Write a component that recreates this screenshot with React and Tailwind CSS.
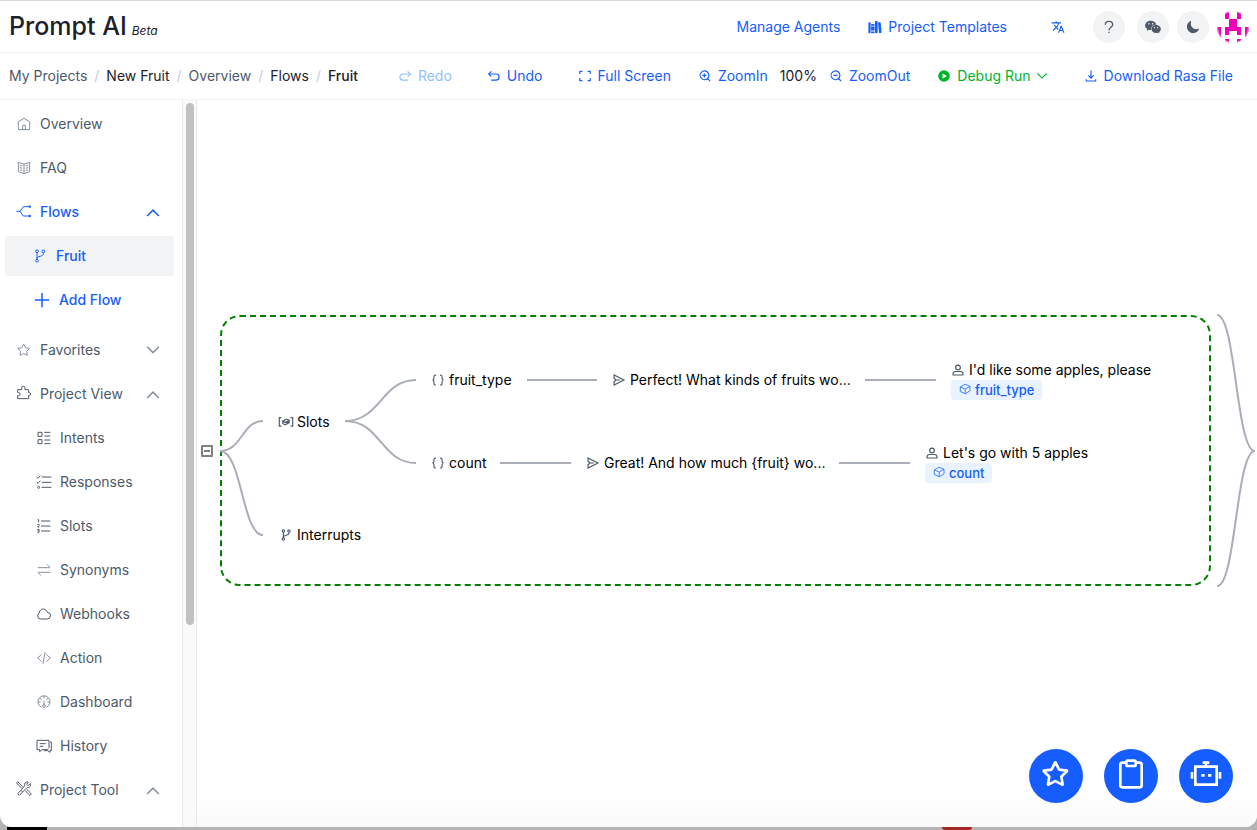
import React from "react";
import { MdTranslate } from "react-icons/md";
import { IoLibrary, IoMoon } from "react-icons/io5";
import { AiFillWechat } from "react-icons/ai";

const PATHS = {
  home: ["M7 17 24 7l17 10v24H7V17Z", "M20 28h8v13h-8V28Z"],
  book: [
    "M24 13 7 7v28l17 6 17-6V7l-17 6Zm0 0v27.5M29 18l7-2.5M29 25l7-2.5M29 32l7-2.5M19 18l-7-2.5m7 9.5-7-2.5m7 9.5-7-2.5",
  ],
  branch: [
    "M19 10a4 4 0 1 1-8 0 4 4 0 0 1 8 0ZM38 10a4 4 0 1 1-8 0 4 4 0 0 1 8 0ZM19 38a4 4 0 1 1-8 0 4 4 0 0 1 8 0ZM15 14v20M34 14v3c0 10-19 6-19 15",
  ],
  plus: ["M5 24h38M24 5v38"],
  star: [
    "M22.552 6.908a.5.5 0 0 1 .896 0l5.02 10.17a.5.5 0 0 0 .376.274l11.224 1.631a.5.5 0 0 1 .277.853l-8.122 7.916a.5.5 0 0 0-.143.443l1.917 11.178a.5.5 0 0 1-.726.527l-10.038-5.278a.5.5 0 0 0-.466 0L12.73 39.9a.5.5 0 0 1-.726-.527l1.918-11.178a.5.5 0 0 0-.144-.443l-8.122-7.916a.5.5 0 0 1 .278-.853l11.223-1.63a.5.5 0 0 0 .376-.274l5.02-10.17Z",
  ],
  up: ["M39.6 34.557 24.043 19 8.487 34.557"],
  down: ["M39.6 15.443 24.043 31 8.487 15.443"],
  undo: ["m15 8-9 9 9 9", "M6 17h25a10 10 0 0 1 0 21H14"],
  redo: ["m33 8 9 9-9 9", "M42 17H17a10 10 0 0 0 0 21h17"],
  full: [
    "M42 17V9a1 1 0 0 0-1-1h-8M6 17V9a1 1 0 0 1 1-1h8m27 23v8a1 1 0 0 1-1 1h-8M6 31v8a1 1 0 0 0 1 1h8",
  ],
  zoomIn: ["M32.6 32.6A15 15 0 1 0 11.4 11.4a15 15 0 0 0 21.2 21.2Zm0 0 8.9 8.9M29 22H15m7 7V15"],
  zoomOut: ["M32.6 32.6A15 15 0 1 0 11.4 11.4a15 15 0 0 0 21.2 21.2Zm0 0 8.9 8.9M29 22H15"],
  download: ["m33.072 22.071-9.07 9.071-9.072-9.07M24 5v26m16 4v6H8v-6"],
  send: ["m14 24-7-6V7l34 17L7 41V30l7-6Zm0 0h13"],
  user: ["M7 37c0-5 4-8 9-8h16c5 0 9 3 9 8v3a1 1 0 0 1-1 1H8a1 1 0 0 1-1-1v-3Z", "M32 15a8 8 0 1 1-16 0 8 8 0 0 1 16 0Z"],
  question: ["M13 17c0-6 5-10 11-10s11 4 11 10c0 8-11 8-11 17", "M24 38v4"],
  code: ["M16.734 12.686 5.42 24l11.314 11.314m14.521-22.628L42.57 24 31.255 35.314M27.2 6.28l-6.251 35.453"],
  dashboard: [
    "M17 40a18 18 0 1 1 14 0M24 6v8M42 24h-8M6 24h8M11 12l6 6M37 12l-6 6M24 20v12",
    "M28 36a4 4 0 1 1-8 0 4 4 0 0 1 8 0Z",
  ],
  swap: ["M5 17h35.586c.89 0 1.337-1.077.707-1.707L33 7M43 31H7.414c-.89 0-1.337 1.077-.707 1.707L15 41"],
  cloud: ["M5 30a9 9 0 0 0 9 9h19a10 10 0 0 0 1-20C32 13 28 9 22 9c-7 0-12 5-12 12a9 9 0 0 0-5 9Z"],
  split: ["M1 22h11L22 8h20M12 22l10 14h20", "M40 5l5 3-5 3ZM40 33l5 3-5 3Z"],
  puzzle: ["M5 11h12V6a5 5 0 0 1 10 0v5h11v9h2a4 4 0 0 1 0 8h-2v10H5V29h3a4 4 0 0 0 0-9H5Z"],
  intents: ["M6 7h12v12H6ZM6 29h12v12H6ZM25 7h18M25 18h18M25 30h18M25 41h18"],
  responses: ["M17 9h29M17 25h29M17 40h29M2 9l4 4 7-8M2 24l4 4 7-8M5 40a3 3 0 1 0 6 0 3 3 0 0 0-6 0Z"],
  ordered: ["M15 9h28M15 24h28M15 39h28M5 5h3v8M4 19h5v4l-4 4h5M4 34h5v9H4M5 38h4"],
  chat: ["M37 35H18l-7 6v-6H3V7h36v24", "M42 12h4v26h-4v5l-7-5H24", "M11 17h18M11 25h11"],
  tools: [
    "M15 25 5 35l5 5 10-10M20 14 10 4 5-1 2 3l5 6 10 9",
    "M43 5l-7 6-4-4 5-7c-9-2-13 5-11 11L15 25l5 5 13-13c7 1 13-4 10-12Z",
    "M28 26l11 12c3 4 8-1 5-5L33 23",
  ],
  braces: ["M17 7h-3c-4 0-4 3-4 7v4c0 4-2 6-5 6 3 0 5 2 5 6v4c0 4 0 7 4 7h3M31 7h3c4 0 4 3 4 7v4c0 4 2 6 5 6-3 0-5 2-5 6v4c0 4 0 7-4 7h-3"],
  cube: ["M24 1 44 9v18L26 39 5 30V12L24 1ZM5 12l20 8 19-11M25 20v19"],
  slot: ["M8 9H1v29h7M40 9h7v29h-7", "M13 21l13-7 9 4-14 8-8-5v8l8 5 14-8v-8M21 26l14-2"],
  clipboard: [
    "M17 7h-6a3 3 0 0 0-3 3v31a3 3 0 0 0 3 3h26a3 3 0 0 0 3-3V10a3 3 0 0 0-3-3h-6",
    "M19 4h10a2 2 0 0 1 2 2v4a2 2 0 0 1-2 2H19a2 2 0 0 1-2-2V6a2 2 0 0 1 2-2Z",
  ],
  robot: ["M8 13h32v27H8ZM24 13V7M19 7h10M3 21v10M45 21v10M17 26h5M27 26h5"],
};

function Icon({ name, className = "size-[14px]", w = 4 }) {
  return (
    <svg viewBox="0 0 48 48" fill="none" stroke="currentColor" strokeWidth={w} className={`shrink-0 overflow-visible ${className}`} aria-hidden="true">
      {PATHS[name].map((d) => (
        <path key={d} d={d} />
      ))}
    </svg>
  );
}

function Slash() {
  return <span className="text-[#c9cdd4]" aria-hidden="true">/</span>;
}

function Tool({ icon, children, className = "text-[#165dff]", disabled = false }) {
  return (
    <button type="button" disabled={disabled} className={`flex items-center gap-1.5 ${className}`}>
      <Icon name={icon} />
      {children}
    </button>
  );
}

function NavItem({ icon, label, sub, active, chevron, className = "", iconColor = "text-[#86909c]" }) {
  return (
    <a
      href="#"
      className={`flex h-10 shrink-0 items-center gap-2 rounded-sm pr-3 ${sub ? "pl-[31px]" : "pl-[11px]"} ${active ? "font-medium text-[#165dff]" : "text-[#4e5969]"} ${className}`}
    >
      <Icon name={icon} w={3} className={`size-4 ${active ? "" : iconColor}`} />
      <span className="flex-1">{label}</span>
      {chevron && <Icon name={chevron} className={`size-[18px] ${active ? "" : "text-[#86909c]"}`} />}
    </a>
  );
}

function Avatar() {
  return (
    <svg viewBox="0 0 32 32" className="size-8" role="img" aria-label="Account">
      <clipPath id="disc">
        <circle cx="16" cy="16" r="16" />
      </clipPath>
      <path
        clipPath="url(#disc)"
        fill="#f000b8"
        d="M8 0h4v8H8ZM20 0h4v8h-4ZM12 8h8v8h4v8h-4v-4h-8v4H8v-8h4ZM0 16h4v12H0ZM28 16h4v12h-4ZM8 28h4v4H8ZM20 28h4v4h-4Z"
      />
      <circle cx="16" cy="16" r="15.5" fill="none" stroke="#f2f3f5" strokeWidth="0.5" />
    </svg>
  );
}

function Label({ icon, children, className }) {
  return (
    <div className={`absolute flex -translate-y-1/2 items-center gap-1 whitespace-nowrap text-black ${className}`}>
      <Icon name={icon} className="size-[14px] text-[#4e5969]" />
      {children}
    </div>
  );
}

function Tag({ children }) {
  return (
    <span className="flex h-5 w-fit items-center gap-1 rounded-sm bg-[#e8f3ff] px-2 text-[13px] font-medium text-[#165dff]">
      <Icon name="cube" className="size-3" w={3} />
      {children}
    </span>
  );
}

function Reply({ text, slot, className }) {
  return (
    <div className={`absolute whitespace-nowrap text-black ${className}`}>
      <div className="flex h-5 items-center gap-1">
        <Icon name="user" className="size-[14px] text-[#4e5969]" />
        {text}
      </div>
      <Tag>{slot}</Tag>
    </div>
  );
}

function Fab({ icon, label }) {
  return (
    <button type="button" aria-label={label} className="flex size-[54px] items-center justify-center rounded-full bg-[#165dff] pb-1 text-white">
      <Icon name={icon} className="size-8" />
    </button>
  );
}

export default function App() {
  return (
    <div className="flex h-screen flex-col bg-[#b4b4b4] font-['Inter',sans-serif] text-sm">
      <div className="flex min-h-0 flex-1 flex-col overflow-hidden rounded-b-xl border-t border-[#d5d8d8] bg-white pt-px">
        <header className="flex h-[51px] shrink-0 items-center border-b border-[#f2f3f5] pr-2 pl-[9px]">
          <h1 className="flex items-baseline gap-[5px] text-[#1d2129]">
            <span className="text-[25px] font-medium">Prompt AI</span>
            <em className="text-xs">Beta</em>
          </h1>
          <nav className="ml-auto flex items-center text-[#165dff]">
            <a href="#" className="mr-7">Manage Agents</a>
            <a href="#" className="mr-11 flex items-center gap-1.5">
              <IoLibrary className="size-[14px]" />
              Project Templates
            </a>
            <button type="button" aria-label="Language" className="mr-7">
              <MdTranslate className="size-[14px]" />
            </button>
          </nav>
          <div className="flex items-center text-[#4e5969]">
            <button type="button" aria-label="Help" className="mr-3 flex size-8 items-center justify-center rounded-full bg-[#f2f3f5]">
              <Icon name="question" className="size-4" />
            </button>
            <button type="button" aria-label="WeChat" className="mr-2 flex size-8 items-center justify-center rounded-full bg-[#f2f3f5]">
              <AiFillWechat className="size-[18px]" />
            </button>
            <button type="button" aria-label="Dark mode" className="mr-2 flex size-8 items-center justify-center rounded-full bg-[#f2f3f5]">
              <IoMoon className="size-[14px]" />
            </button>
            <Avatar />
          </div>
        </header>

        <div className="flex h-[47px] shrink-0 items-center border-b border-[#f2f3f5] pr-6 pl-[9px] whitespace-nowrap">
          <nav aria-label="Breadcrumb" className="mr-auto flex items-center gap-[7px] text-[#1d2129]">
            <a href="#" className="text-[#4e5969]">My Projects</a>
            <Slash />
            <a href="#">New Fruit</a>
            <Slash />
            <a href="#" className="text-[#4e5969]">Overview</a>
            <Slash />
            <a href="#">Flows</a>
            <Slash />
            <span className="font-medium">Fruit</span>
          </nav>
          <div className="flex items-center gap-[35px]">
            <Tool icon="redo" disabled className="text-[#94bfff]">Redo</Tool>
            <Tool icon="undo">Undo</Tool>
            <Tool icon="full">Full Screen</Tool>
          </div>
          <div className="mx-[27px] flex items-center gap-3">
            <Tool icon="zoomIn">ZoomIn</Tool>
            <span className="text-[#1d2129]">100%</span>
            <Tool icon="zoomOut">ZoomOut</Tool>
          </div>
          <div className="flex items-center gap-[35px]">
            <button type="button" className="flex items-center gap-1.5 text-[#00b42a]">
              <svg viewBox="0 0 48 48" className="size-[14px]" aria-hidden="true">
                <circle cx="24" cy="24" r="20" fill="currentColor" />
                <path d="M19 15v18l15-9Z" fill="white" />
              </svg>
              <span className="flex items-center gap-1">
                Debug Run
                <Icon name="down" className="size-[14px]" />
              </span>
            </button>
            <a href="#" className="flex items-center gap-1.5 text-[#165dff]">
              <Icon name="download" />
              Download Rasa File
            </a>
          </div>
        </div>

        <div className="flex min-h-0 flex-1">
          <nav aria-label="Project" className="flex w-[182px] shrink-0 flex-col gap-1 overflow-hidden py-1 pr-2 pl-[5px]">
            <NavItem icon="home" label="Overview" />
            <NavItem icon="book" label="FAQ" />
            <NavItem icon="split" label="Flows" active chevron="up" />
            <a href="#" className="flex h-10 shrink-0 items-center gap-2 rounded-sm bg-[#f2f3f5] pl-[27px] font-medium text-[#165dff]">
              <Icon name="branch" className="size-4" w={3} />
              Fruit
            </a>
            <button type="button" className="flex h-10 shrink-0 items-center gap-2 pl-7 font-medium text-[#165dff]">
              <Icon name="plus" className="size-[18px]" />
              Add Flow
            </button>
            <NavItem icon="star" label="Favorites" chevron="down" className="mt-1.5" />
            <NavItem icon="puzzle" label="Project View" chevron="up" iconColor="text-[#4e5969]" />
            <NavItem icon="intents" label="Intents" sub iconColor="text-[#4e5969]" />
            <NavItem icon="responses" label="Responses" sub iconColor="text-[#4e5969]" />
            <NavItem icon="ordered" label="Slots" sub iconColor="text-[#4e5969]" />
            <NavItem icon="swap" label="Synonyms" sub />
            <NavItem icon="cloud" label="Webhooks" sub iconColor="text-[#4e5969]" />
            <NavItem icon="code" label="Action" sub />
            <NavItem icon="dashboard" label="Dashboard" sub />
            <NavItem icon="chat" label="History" sub iconColor="text-[#4e5969]" />
            <NavItem icon="tools" label="Project Tool" chevron="up" iconColor="text-[#4e5969]" />
          </nav>
          <div className="w-[15px] shrink-0 border-x border-[#e8e8e8] bg-[#fafafa] px-[3px] pt-[3px]">
            <div className="h-[522px] w-2 rounded-full bg-[#c1c1c1]" />
          </div>

          <main className="relative min-w-0 flex-1 overflow-hidden bg-linear-to-b from-white from-95% to-[#fafafa]">
            <div className="absolute top-[215px] left-[23px] h-[271px] w-[991px] rounded-[20px] border-2 border-dashed border-[#008000]" />
            <svg className="absolute top-0 left-0 h-[727px] w-[1060px]" fill="none" stroke="#a9aeb8" strokeWidth="2" aria-hidden="true">
              <path d="M23 351C45 351 45 321 66 321M23 351C45 351 45 435 66 435" />
              <path d="M148 321C184 321 184 280 219 280M148 321C184 321 184 363 219 363" />
              <path d="M330 280H400M303 363H374M668 280H739M642 363H713" />
              <path d="M1020 215C1039 215 1039 351 1058 351C1039 351 1039 486 1020 486" />
            </svg>
            <button type="button" aria-label="Collapse" className="absolute top-[345px] left-1 flex size-3 items-center justify-center rounded-[1px] border-2 border-[#808080] bg-white">
              <span className="h-0.5 w-1.5 bg-[#808080]" />
            </button>
            <Label icon="slot" className="top-[322px] left-[82px]">Slots</Label>
            <Label icon="branch" className="top-[435px] left-[82px]">Interrupts</Label>
            <Label icon="braces" className="top-[280px] left-[234px]">fruit_type</Label>
            <Label icon="braces" className="top-[363px] left-[234px]">count</Label>
            <Label icon="send" className="top-[280px] left-[415px]">Perfect! What kinds of fruits wo...</Label>
            <Label icon="send" className="top-[363px] left-[389px]">Great! And how much &#123;fruit&#125; wo...</Label>
            <Reply text="I'd like some apples, please" slot="fruit_type" className="top-[260px] left-[754px]" />
            <Reply text="Let's go with 5 apples" slot="count" className="top-[343px] left-[728px]" />
            <div className="absolute right-6 bottom-6 flex gap-[21px]">
              <Fab icon="star" label="Favorites" />
              <Fab icon="clipboard" label="Notes" />
              <Fab icon="robot" label="Assistant" />
            </div>
          </main>
        </div>
      </div>
      <div className="flex h-[3px] shrink-0 justify-between pr-[285px] pl-[7px]" aria-hidden="true">
        <div className="w-10 bg-black" />
        <div className="w-[30px] rounded-b-full bg-[#9e2a22]" />
      </div>
    </div>
  );
}
